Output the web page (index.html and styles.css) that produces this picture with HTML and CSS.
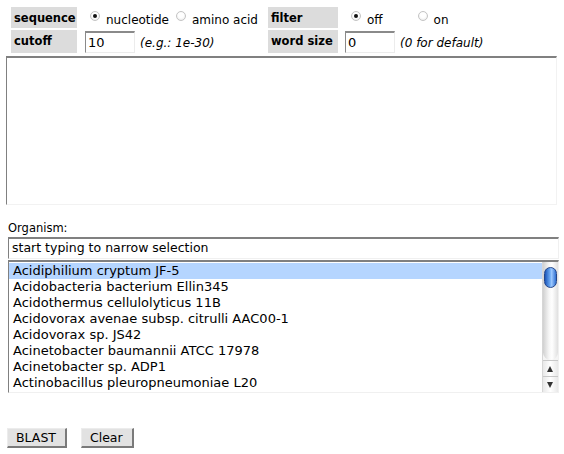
FILE: index.html
```html
<!DOCTYPE html>
<html>
<head>
<meta charset="utf-8">
<link rel="stylesheet" href="styles.css">
</head>
<body>
<form class="page">
  <div class="opts">
    <div class="lbl">sequence</div>
    <div class="cell">
      <label class="radio"><span class="rb on"></span>nucleotide</label>
      <label class="radio r2"><span class="rb"></span>amino acid</label>
    </div>
    <div class="lbl">filter</div>
    <div class="cell">
      <label class="radio"><span class="rb on"></span>off</label>
      <label class="radio r3"><span class="rb"></span>on</label>
    </div>
    <div class="lbl">cutoff</div>
    <div class="cell">
      <span class="txt">10</span><span class="hint">(e.g.: 1e-30)</span>
    </div>
    <div class="lbl">word size</div>
    <div class="cell">
      <span class="txt">0</span><span class="hint">(0 for default)</span>
    </div>
  </div>
  <div class="area"></div>
  <div class="orglbl">Organism:</div>
  <div class="search">start typing to narrow selection</div>
  <div class="list">
    <div class="items">
      <div class="item sel">Acidiphilium cryptum JF-5</div>
      <div class="item">Acidobacteria bacterium Ellin345</div>
      <div class="item">Acidothermus cellulolyticus 11B</div>
      <div class="item">Acidovorax avenae subsp. citrulli AAC00-1</div>
      <div class="item">Acidovorax sp. JS42</div>
      <div class="item">Acinetobacter baumannii ATCC 17978</div>
      <div class="item">Acinetobacter sp. ADP1</div>
      <div class="item">Actinobacillus pleuropneumoniae L20</div>
    </div>
    <div class="sbar">
      <div class="track"><div class="thumb"></div></div>
      <div class="arrow up"></div>
      <div class="arrow down"></div>
    </div>
  </div>
  <div class="buttons">
    <span class="btn">BLAST</span>
    <span class="btn">Clear</span>
  </div>
</form>
</body>
</html>
```
FILE: styles.css
```css
html, body { margin: 0; padding: 0; background: #fff; }
body { width: 564px; height: 454px; overflow: hidden; font-family: "DejaVu Sans", Verdana, sans-serif; color: #000; }
.page { padding: 7px 7px 0 6px; }

.opts {
  display: grid;
  grid-template-columns: 66px 187px 70px 1fr;
  grid-template-rows: 21px 23px;
  column-gap: 2px;
  row-gap: 2px;
  margin-left: 5px;
  font-size: 11.5px;
}
.lbl {
  background: #dcdcdc;
  font-weight: bold;
  padding: 4px 0 0 3px;
  box-sizing: border-box;
}
.cell { display: flex; align-items: flex-start; font-size: 12px; }
.radio { display: flex; align-items: flex-start; padding-top: 6px; margin-left: 11px; }
.radio.r2 { margin-left: 7px; }
.radio.r3 { margin-left: 35px; }
.rb {
  width: 10px; height: 10px; border-radius: 50%;
  box-sizing: border-box;
  border: 1px solid #c4c4c4;
  background: radial-gradient(circle at 50% 40%, #ffffff 40%, #e4e4e4 100%);
  margin-right: 6px; margin-top: -2px;
  position: relative;
}
.rb.on::after {
  content: ""; position: absolute; left: 2px; top: 2px;
  width: 4px; height: 4px; border-radius: 50%; background: #111;
}
.txt {
  width: 50px; height: 22px; box-sizing: border-box;
  margin-top: 1px; margin-left: 6px;
  border-top: 2px solid #8a8a8a; border-left: 1px solid #8a8a8a;
  border-right: 1px solid #ececec; border-bottom: 1px solid #ececec;
  font-size: 13px; padding: 2px 0 0 2px;
  font-family: "DejaVu Sans", sans-serif;
}
.cell:nth-child(8) .txt { margin-left: 5px; }
.hint { font-style: italic; font-size: 12px; margin-left: 5px; padding-top: 6px; }

.area {
  margin-top: 3px;
  height: 149px;
  width: 551px;
  box-sizing: border-box;
  border-top: 2px solid #808080; border-left: 1px solid #808080;
  border-right: 1px solid #f2f2f2; border-bottom: 1px solid #f2f2f2;
}
.orglbl {
  margin: 16px 0 0 2px;
  font-size: 11.5px;
  height: 14px;
  line-height: 14px;
}
.search {
  margin: 2px 0 0 2px;
  width: 551px; height: 22px; box-sizing: border-box;
  border-top: 2px solid #808080; border-left: 1px solid #808080;
  border-right: 1px solid #f0f0f0; border-bottom: 1px solid #f0f0f0;
  font-size: 12.5px; padding: 1px 0 0 3px; line-height: 16px;
}
.list {
  margin: 1px 0 0 2px;
  width: 551px; height: 133px; box-sizing: border-box;
  border-top: 2px solid #808080; border-left: 1px solid #808080;
  border-right: 1px solid #f0f0f0; border-bottom: 1px solid #f0f0f0;
  display: flex;
}
.items { flex: 1; padding-top: 1px; font-size: 13px; }
.item { height: 16px; line-height: 16px; padding-left: 4px; white-space: nowrap; }
.item.sel { background: #b5d5ff; }
.sbar { width: 15px; display: flex; flex-direction: column; background: #f4f4f4; border-left: 1px solid #d6d6d6; }
.track {
  flex: 1; position: relative;
  background: linear-gradient(to right, #d0d0d0, #f6f6f6 40%, #ffffff 60%, #e0e0e0);
  border-radius: 0 0 8px 8px;
}
.thumb {
  position: absolute; left: 1px; right: 1px; top: 5px; height: 21px;
  border-radius: 7px;
  background: linear-gradient(to right, #1a54b8, #6aa8f2 45%, #9cc8ff 60%, #2f6fd0);
  border: 1px solid #24468a; box-sizing: border-box;
}
.arrow { height: 15px; position: relative; border-top: 1px solid #c8c8c8; background: linear-gradient(to right, #e8e8e8, #fff 50%, #e8e8e8); }
.arrow::after { content: ""; position: absolute; left: 4px; width: 0; height: 0; border-left: 3.5px solid transparent; border-right: 3.5px solid transparent; }
.arrow.up::after { top: 5px; border-bottom: 6px solid #333; }
.arrow.down::after { top: 5px; border-top: 6px solid #333; }

.buttons { display: flex; gap: 14px; margin: 35px 0 0 1px; }
.btn {
  display: inline-block;
  height: 20px; box-sizing: border-box;
  background: #e2e2e2;
  border-top: 1px solid #ececec; border-left: 1px solid #ececec;
  border-right: 2px solid #7a7a7a; border-bottom: 2px solid #7a7a7a;
  font-size: 12.5px; line-height: 17px;
  padding: 0 9px 0 8px;
}
```
